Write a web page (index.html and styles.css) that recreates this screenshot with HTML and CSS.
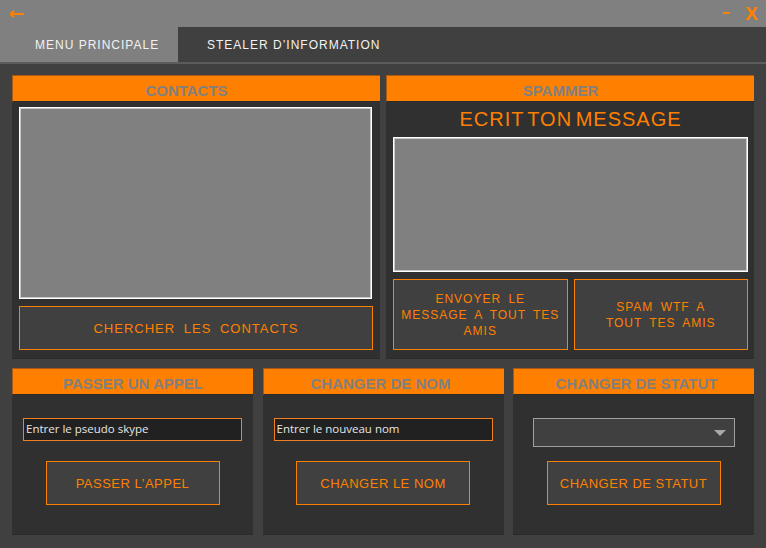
FILE: index.html
```html
<!DOCTYPE html>
<html lang="fr">
<head>
<meta charset="utf-8">
<title>Skype Tool</title>
<link rel="stylesheet" href="styles.css">
</head>
<body>
<div class="window">
  <header class="titlebar">
    <svg class="back" width="16" height="10" viewBox="0 0 16 10"><path d="M1.5 5H15M1.5 5L5 1.8M1.5 5L5 8.2" stroke="#ff8000" stroke-width="2" fill="none"/></svg>
    <div class="controls">
      <span class="min"></span>
      <span class="close">X</span>
    </div>
  </header>
  <nav class="tabs">
    <div class="tab active">MENU PRINCIPALE</div>
    <div class="tab">STEALER D’INFORMATION</div>
  </nav>
  <main class="content">
    <div class="row-top">
      <section class="panel">
        <h2 class="panel-head shifted">CONTACTS</h2>
        <div class="panel-body contacts">
          <div class="listbox"></div>
          <button class="btn btn-wide">CHERCHER LES CONTACTS</button>
        </div>
      </section>
      <section class="panel">
        <h2 class="panel-head shifted">SPAMMER</h2>
        <div class="panel-body spammer">
          <div class="big-title">ECRIT TON MESSAGE</div>
          <div class="listbox msgbox"></div>
          <div class="btn-pair">
            <button class="btn btn-tall">ENVOYER LE<br>MESSAGE A TOUT TES<br>AMIS</button>
            <button class="btn btn-tall">SPAM WTF A<br>TOUT TES AMIS</button>
          </div>
        </div>
      </section>
    </div>
    <div class="row-bottom">
      <section class="panel small">
        <h2 class="panel-head">PASSER UN APPEL</h2>
        <div class="panel-body form">
          <div class="slot"><div class="field">Entrer le pseudo skype</div></div>
          <button class="btn btn-act">PASSER L’APPEL</button>
        </div>
      </section>
      <section class="panel small">
        <h2 class="panel-head nudge-left">CHANGER DE NOM</h2>
        <div class="panel-body form">
          <div class="slot"><div class="field">Entrer le nouveau nom</div></div>
          <button class="btn btn-act">CHANGER LE NOM</button>
        </div>
      </section>
      <section class="panel small">
        <h2 class="panel-head nudge-right">CHANGER DE STATUT</h2>
        <div class="panel-body form">
          <div class="slot center"><div class="combo"><span class="caret"></span></div></div>
          <button class="btn btn-act">CHANGER DE STATUT</button>
        </div>
      </section>
    </div>
  </main>
</div>
</body>
</html>
```

FILE: styles.css
```css
* { box-sizing: border-box; }
html, body { margin: 0; padding: 0; }
body {
  width: 766px;
  height: 548px;
  background: #404040;
  font-family: "Liberation Sans", Arial, sans-serif;
  overflow: hidden;
}
.window { width: 766px; height: 548px; display: flex; flex-direction: column; }

.titlebar {
  height: 27px;
  background: #808080;
  display: flex;
  align-items: center;
  justify-content: space-between;
  padding: 0 8px 0 9px;
}
.back { display: block; margin-top: 1px; }
.controls { display: flex; align-items: center; gap: 15px; }
.min { width: 7px; height: 2px; background: #ff8000; margin-top: -1px; }
.close {
  color: #ff8000;
  font-family: "Liberation Sans", Arial, sans-serif;
  font-weight: bold;
  font-size: 19px;
  line-height: 19px;
  margin-top: -1px;
}

.tabs {
  height: 37px;
  display: flex;
  background: #404040;
  border-bottom: 2px solid #5c5c5c;
}
.tab {
  height: 35px;
  display: flex;
  align-items: center;
  color: #f2f2f2;
  font-size: 12px;
  letter-spacing: 1px;
  padding: 1px 0 0 29px;
}
.tab.active { width: 178px; background: #808080; padding-left: 35px; }

.content {
  flex: 1;
  padding: 11px 12px 0 12px;
  display: flex;
  flex-direction: column;
  gap: 9px;
}
.row-top { display: flex; justify-content: space-between; height: 284px; }
.row-top .panel { width: 368px; }
.row-bottom { display: flex; justify-content: space-between; height: 167px; }
.row-bottom .panel { width: 241px; }

.panel { display: flex; flex-direction: column; background: #303030; border-bottom: 1px solid #2a2a2a; }
.panel-head {
  margin: 0;
  height: 27px;
  background: #ff8000;
  border-top: 1px solid #a85a14;
  border-left: 1px solid #a85a14;
  border-bottom: 1px solid #2a2a2a;
  color: #808080;
  font-size: 15px;
  font-weight: bold;
  text-align: center;
  padding-top: 3px;
  line-height: 23px;
}
.panel-head.shifted { padding-right: 20px; }
.panel-head.nudge-left { padding-right: 6px; }
.panel-head.nudge-right { padding-left: 5px; }
.panel-body { flex: 1; display: flex; flex-direction: column; }

.listbox {
  background: #808080;
  border: 1px solid #ffffff;
  box-shadow: inset 0 0 0 1px #c8c8c8;
}
.contacts { padding: 5px 7px 9px 7px; gap: 7px; }
.contacts .listbox { height: 192px; margin-right: 1px; }

.btn {
  background: #404040;
  border: 1px solid #ff8000;
  color: #ff8000;
  font-family: "Liberation Sans", Arial, sans-serif;
  font-size: 13px;
  letter-spacing: 0.5px;
  text-align: center;
  padding: 0;
  margin: 0;
  cursor: pointer;
}
.btn-wide { height: 44px; letter-spacing: 1px; word-spacing: 4px; padding-top: 1px; }

.spammer { padding: 0 6px 9px 7px; }
.big-title {
  height: 35px;
  line-height: 35px;
  font-size: 20px;
  color: #ff8000;
  text-align: center;
  letter-spacing: 1px;
  word-spacing: -3px;
}
.msgbox { height: 135px; }
.btn-pair { display: flex; gap: 6px; margin-top: 7px; height: 71px; }
.btn-tall {
  flex: 1;
  font-size: 12px;
  line-height: 16px;
  letter-spacing: 1px;
  word-spacing: 3px;
}

.form { padding: 23px 11px 30px 11px; align-items: center; }
.slot { height: 29px; width: 100%; }
.slot.center { display: flex; justify-content: center; }
.field {
  height: 23px;
  background: #212121;
  border: 1px solid #f08020;
  color: #e6e6e6;
  font-family: "Open Sans", "Noto Sans", sans-serif;
  font-size: 11.5px;
  line-height: 20px;
  padding-left: 2px;
  white-space: nowrap;
}
.combo {
  width: 202px;
  height: 29px;
  background: #404040;
  border: 1px solid #a0a0a0;
  position: relative;
}
.caret {
  position: absolute;
  right: 8px;
  top: 11px;
  width: 0;
  height: 0;
  border-left: 6px solid transparent;
  border-right: 6px solid transparent;
  border-top: 6px solid #a8a8a8;
}
.btn-act { width: 174px; height: 44px; margin-top: 14px; padding-top: 1px; }
```
